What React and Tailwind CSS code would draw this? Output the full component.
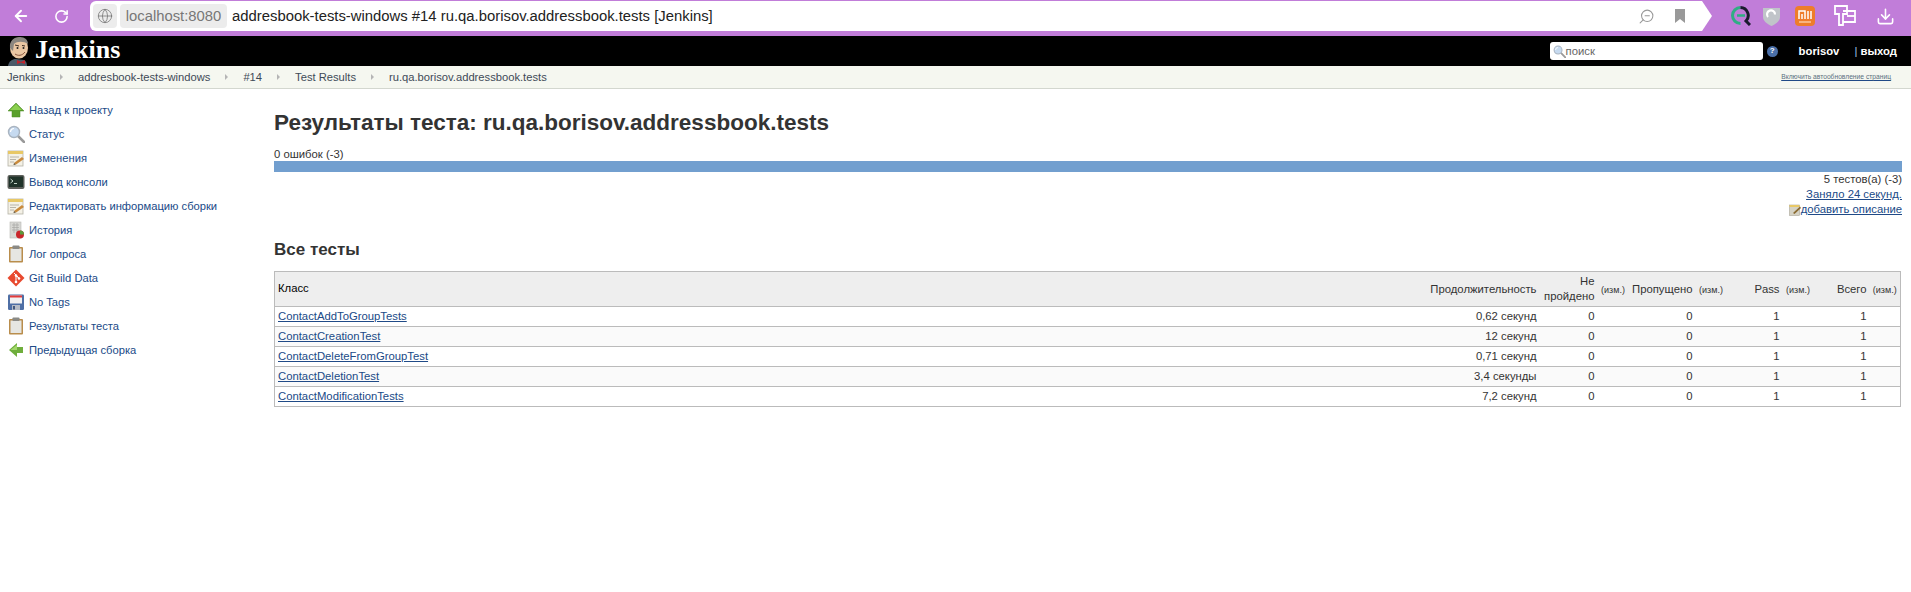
import { ArrowLeft, RotateCw, Globe, ZoomOut, Download } from 'lucide-react';

const Sans = '[font-family:"Liberation_Sans",Arial,sans-serif]';

function UpArrow() {
    return (
        <svg viewBox="0 0 18 18" className="h-[18px] w-[18px]">
            <path d="M9 2 L17 10 H13 V16 H5 V10 H1 Z" fill="#5aa02c" stroke="#4a8a22" strokeWidth="0.5" />
            <path d="M9 3 L15 9 H3 Z" fill="#8cd050" />
        </svg>
    );
}

function BackArrow() {
    return (
        <svg viewBox="0 0 18 18" className="h-[18px] w-[18px]">
            <path d="M2 9 L10 2 V6 H16 V12 H10 V16 Z" fill="#6fae3c" />
            <path d="M3.5 9 L10 3.8 V9 Z" fill="#a2d76a" />
        </svg>
    );
}

function Magnifier({ className = 'h-[18px] w-[18px]' }) {
    return (
        <svg viewBox="0 0 18 18" className={className}>
            <path d="M11 11 L17 17" stroke="#9a9a9a" strokeWidth="2.5" strokeLinecap="round" />
            <circle cx="7" cy="7" r="5.5" fill="#c6daf0" stroke="#a9b4c0" strokeWidth="1.4" />
            <path d="M3.5 7 A3.5 3.5 0 0 1 7 3.5" stroke="#fff" strokeWidth="1.2" fill="none" />
        </svg>
    );
}

function Notepad() {
    return (
        <svg viewBox="0 0 18 18" className="h-[18px] w-[18px]">
            <rect x="1" y="2" width="15" height="15" fill="#f4f1e6" stroke="#b5b2a5" strokeWidth="0.8" />
            <rect x="1" y="2" width="15" height="3" fill="#e8c866" />
            <path d="M3 8 H12 M3 10.5 H9 M3 13 H7" stroke="#a9a69a" strokeWidth="0.8" />
            <path d="M7 14 L15 8 L17 10 L9 15.5 Z" fill="#c98a3c" />
            <path d="M7 14 L9 15.5 L6.5 16 Z" fill="#5a4a32" />
        </svg>
    );
}

function Terminal() {
    return (
        <svg viewBox="0 0 18 18" className="h-[18px] w-[18px]">
            <rect x="0.5" y="2" width="17" height="14" rx="2" fill="#5c5f5a" />
            <rect x="2" y="3.5" width="14" height="10.5" fill="#1f3329" />
            <path d="M3.5 6 L6 8 L3.5 10 M7 10.5 H10" stroke="#d6e6da" strokeWidth="0.9" fill="none" />
        </svg>
    );
}

function History() {
    return (
        <svg viewBox="0 0 18 18" className="h-[18px] w-[18px]">
            <rect x="3" y="1" width="11" height="16" fill="#d8d8d4" stroke="#b8b8b4" strokeWidth="0.6" />
            <path d="M5 4 H12 M5 6.5 H12 M5 9 H12 M7 2 V12 M10 2 V12" stroke="#a8a8a4" strokeWidth="0.7" />
            <circle cx="13" cy="13.5" r="4" fill="#c9262b" />
            <path d="M13 13.5 L13 9.5 A4 4 0 0 1 17 13.5 Z" fill="#5b9a3a" />
        </svg>
    );
}

function Clipboard() {
    return (
        <svg viewBox="0 0 18 18" className="h-[18px] w-[18px]">
            <rect x="2" y="2" width="14" height="15.5" rx="1" fill="#b98d4c" />
            <rect x="3.5" y="3.5" width="11" height="12.5" fill="#e6e6e2" />
            <rect x="5.5" y="0.5" width="7" height="3.5" rx="0.8" fill="#8a8a86" />
        </svg>
    );
}

function GitLogo() {
    return (
        <svg viewBox="0 0 18 18" className="h-[18px] w-[18px]">
            <path d="M9 0.5 L17.5 9 L9 17.5 L0.5 9 Z" fill="#e8492f" />
            <path d="M7 4 L12 9 M9 6.5 V13 M9 7 L12 9" stroke="#fff" strokeWidth="1" fill="none" />
            <circle cx="9" cy="13" r="1.3" fill="#fff" />
            <circle cx="12" cy="9.5" r="1.3" fill="#fff" />
            <circle cx="9" cy="6.5" r="1.3" fill="#fff" />
        </svg>
    );
}

function Floppy() {
    return (
        <svg viewBox="0 0 18 18" className="h-[18px] w-[18px]">
            <rect x="1" y="1.5" width="16" height="15.5" rx="1.2" fill="#4f6fa5" />
            <rect x="3" y="2.5" width="12" height="8" fill="#f1f1f1" />
            <rect x="3" y="2.5" width="12" height="2" fill="#e33b3b" />
            <rect x="5" y="12" width="8" height="5" fill="#b6bcc6" />
            <rect x="6" y="13" width="2" height="3.5" fill="#44597f" />
        </svg>
    );
}

function JenkinsLogo() {
    return (
        <svg viewBox="0 0 26 30" className="h-[30px] w-[26px] shrink-0">
            <path d="M1 30 C2 25 5 23 9 23 L17 24 C19 25 20 27 20 30 Z" fill="#4b5a68" />
            <path d="M10 24 L14 26 L18 24 L18 28 L14 26.5 L10 28 Z" fill="#c6232b" />
            <ellipse cx="12" cy="12" rx="9" ry="10.5" fill="#eac7a3" />
            <path d="M3 12 C2 4 8 1 13 1 C18 1 21 4 21 8 C17 5 10 5 7 8 L6 15 Z" fill="#8a8680" />
            <path d="M8 9 L12 10 M15 9.5 L18 10" stroke="#3a2a20" strokeWidth="1" />
            <circle cx="10.5" cy="12" r="1" fill="#222" />
            <circle cx="16.5" cy="12" r="1" fill="#222" />
            <path d="M8 18 C11 20 15 20 18 16" stroke="#7a4630" strokeWidth="0.9" fill="none" />
        </svg>
    );
}

function EqLogo() {
    return (
        <svg viewBox="0 0 20 20" className="h-[20px] w-[20px]">
            <path d="M9.5 1.5 A8 8 0 0 0 9.5 17.5" stroke="#2fae84" strokeWidth="3" fill="none" />
            <path d="M9.5 1.5 A8 8 0 0 1 15 15 L19 19" stroke="#1b1b2e" strokeWidth="3" fill="none" />
            <path d="M6 9.5 H14" stroke="#2fae84" strokeWidth="2.5" />
        </svg>
    );
}

function ShieldLogo() {
    return (
        <svg viewBox="0 0 17 19" className="h-[19px] w-[17px]">
            <path d="M0 1 H17 V10 C17 14 13 17 8.5 19 C4 17 0 14 0 10 Z" fill="#c0c4c9" />
            <path d="M5 10 A4 4 0 1 1 12 7.5" stroke="#fff" strokeWidth="2.2" fill="none" />
        </svg>
    );
}

function MiLogo() {
    return (
        <svg viewBox="0 0 20 20" className="h-[20px] w-[20px]">
            <rect width="20" height="20" rx="4" fill="#ee7d2b" />
            <path d="M4 13 V5 H10 V13 M7 8 V13 M13 5 V13 M16 5 V13" stroke="#fff" strokeWidth="1.5" fill="none" />
            <path d="M4 16 H16" stroke="#ffd9b8" strokeWidth="1.2" />
        </svg>
    );
}

function KeysLogo() {
    return (
        <svg viewBox="0 0 22 22" className="h-[22px] w-[22px]" fill="none" stroke="#fff" strokeWidth="1.8">
            <path d="M1 1 H13 V9 H9 V20 H5 V9 H1 Z" />
            <path d="M9 6 H21 V17 H9" />
            <path d="M13 11 H21" />
        </svg>
    );
}

const sidebarItems = [
    { label: 'Назад к проекту', icon: <UpArrow /> },
    { label: 'Статус', icon: <Magnifier /> },
    { label: 'Изменения', icon: <Notepad /> },
    { label: 'Вывод консоли', icon: <Terminal /> },
    { label: 'Редактировать информацию сборки', icon: <Notepad /> },
    { label: 'История', icon: <History /> },
    { label: 'Лог опроса', icon: <Clipboard /> },
    { label: 'Git Build Data', icon: <GitLogo /> },
    { label: 'No Tags', icon: <Floppy /> },
    { label: 'Результаты теста', icon: <Clipboard /> },
    { label: 'Предыдущая сборка', icon: <BackArrow /> },
];

const crumbs = ['Jenkins', 'addresbook-tests-windows', '#14', 'Test Results', 'ru.qa.borisov.addressbook.tests'];

const rows = [
    { name: 'ContactAddToGroupTests', time: '0,62 секунд' },
    { name: 'ContactCreationTest', time: '12 секунд' },
    { name: 'ContactDeleteFromGroupTest', time: '0,71 секунд' },
    { name: 'ContactDeletionTest', time: '3,4 секунды' },
    { name: 'ContactModificationTests', time: '7,2 секунд' },
];

function Diff() {
    return <span className="text-[9px] text-[#333]">(изм.)</span>;
}

export default function App() {
    return (
        <div className={`${Sans} min-h-[592px] bg-white text-[11.3px] text-[#333]`}>
            {/* browser bar */}
            <div className="flex h-9 items-center bg-[#c17dd9] pb-[5px] pt-[1px]">
                <div className="flex w-[90px] shrink-0 items-center pl-[12px] text-white">
                    <ArrowLeft className="h-[18px] w-[18px]" strokeWidth={2.5} />
                    <RotateCw className="ml-[24px] h-[15px] w-[15px]" strokeWidth={2.5} />
                </div>
                <div className="flex h-[30px] w-[1622px] shrink-0 items-center rounded-l-[6px] bg-white pl-[3px] [clip-path:polygon(0_0,1612px_0,100%_50%,1612px_100%,0_100%)]">
                    <div className="flex h-[24px] w-[24px] items-center justify-center rounded-[4px] bg-[#ececec]">
                        <Globe className="h-[16px] w-[16px] text-[#777]" strokeWidth={1.2} />
                    </div>
                    <div className="ml-[3px] flex h-[24px] w-[107px] items-center justify-center rounded-[4px] bg-[#ececec] text-[14.8px] text-[#777]">
                        localhost:8080
                    </div>
                    <div className="ml-[5px] flex-1 text-[14.85px] text-[#222]">
                        addresbook-tests-windows #14 ru.qa.borisov.addressbook.tests [Jenkins]
                    </div>
                    <ZoomOut className="h-[17px] w-[17px] -scale-x-100 text-[#999]" strokeWidth={1.5} />
                    <svg viewBox="0 0 10 14" className="ml-[20px] mr-[27px] h-[14px] w-[10px]">
                        <path d="M0 0 H10 V14 L5 10 L0 14 Z" fill="#999" />
                    </svg>
                </div>
                <div className="ml-[19px] flex items-center">
                    <EqLogo />
                    <span className="ml-[12px]"><ShieldLogo /></span>
                    <span className="ml-[15px]"><MiLogo /></span>
                    <span className="ml-[19px]"><KeysLogo /></span>
                    <Download className="ml-[20px] h-[19px] w-[19px] text-white" strokeWidth={2} />
                </div>
            </div>

            {/* jenkins header */}
            <div className="flex h-[30px] items-center bg-black pr-[14px] text-white">
                <div className="ml-[7px] flex items-center">
                    <JenkinsLogo />
                    <span className="ml-[2px] pb-[2px] text-[26px] font-bold leading-none [font-family:'Liberation_Serif',serif]">Jenkins</span>
                </div>
                <div className="ml-auto flex items-center">
                    <div className="flex h-[18px] w-[213px] items-center rounded-[3px] bg-white pl-[3px] text-[11.3px] text-[#666]">
                        <Magnifier className="h-[13px] w-[13px]" />
                        поиск
                    </div>
                    <span className="ml-[4px] flex h-[11px] w-[11px] items-center justify-center rounded-full bg-[#4a6fa8] text-[8px] font-bold text-white">?</span>
                    <span className="ml-[21px] text-[11.3px] font-bold">borisov</span>
                    <span className="ml-[15px] text-[11.3px] font-bold"><span className="font-normal text-[#9cc3ea]">|</span> выход</span>
                </div>
            </div>

            {/* breadcrumbs */}
            <div className="flex h-[23px] items-center border-b border-[#d3d7cf] bg-[#f5f7f0] pl-[7px] pr-[20px] text-[11.2px]">
                {crumbs.map((crumb, i) => (
                    <div key={crumb} className="flex items-center text-[#3e4a57]">
                        {i > 0 && <span className="mx-[15px] h-0 w-0 border-y-[3px] border-l-[3px] border-y-transparent border-l-[#b5b5b5]" />}
                        {crumb}
                    </div>
                ))}
                <a className="ml-auto text-[6.7px] text-[#5a7080] underline decoration-[#204a87]">Включить автообновление страниц</a>
            </div>

            <div className="flex">
                {/* sidebar */}
                <div className="w-[274px] shrink-0 pl-[7px] pt-[9px] text-[11.2px]">
                    {sidebarItems.map((item) => (
                        <div key={item.label} className="flex h-[24px] items-center">
                            {item.icon}
                            <span className="ml-[4px] text-[#204a87]">{item.label}</span>
                        </div>
                    ))}
                </div>

                {/* main */}
                <div className="w-[1628px] shrink-0 pt-[21px]">
                    <h1 className="text-[22.5px] font-bold leading-[26px] text-[#333]">Результаты теста: ru.qa.borisov.addressbook.tests</h1>
                    <div className="mt-[12px] leading-[13px]">0 ошибок (-3)</div>
                    <div className="h-[11px] bg-[#729fcf]" />
                    <div className="text-right leading-[15px]">5 тестов(а) (-3)</div>
                    <div className="text-right leading-[15px] text-[#204a87] underline">Заняло 24 секунд.</div>
                    <div className="flex items-center justify-end leading-[15px] text-[#204a87]">
                        <svg viewBox="0 0 12 12" className="h-[12px] w-[12px]">
                            <rect x="0.5" y="1" width="10" height="10.5" fill="#d5d2c4" stroke="#a8a698" strokeWidth="0.6" />
                            <rect x="0.5" y="1" width="10" height="2" fill="#e8c866" />
                            <path d="M4 9 L11 2.5 L12 4 L5.5 10 Z" fill="#8a6a30" />
                        </svg>
                        <span className="underline">добавить описание</span>
                    </div>
                    <h2 className="mt-[23px] text-[17px] font-bold leading-[20px] text-[#333]">Все тесты</h2>
                    <table className="mt-[11px] w-[1627px] table-fixed border-collapse border border-[#bbb]">
                        <colgroup>
                            <col />
                            <col className="w-[120px]" />
                            <col className="w-[57px]" />
                            <col className="w-[31px]" />
                            <col className="w-[67px]" />
                            <col className="w-[31px]" />
                            <col className="w-[56px]" />
                            <col className="w-[31px]" />
                            <col className="w-[56px]" />
                            <col className="w-[31px]" />
                        </colgroup>
                        <thead>
                            <tr className="h-[35px] bg-[#eee] text-[#333]">
                                <th className="px-[3px] pb-[2px] text-left font-normal text-black">Класс</th>
                                <th className="whitespace-nowrap pl-[3px] pr-[4px] text-right font-normal">Продолжительность</th>
                                <th className="px-[3px] text-right font-normal leading-[15px]">Не<br />пройдено</th>
                                <th className="whitespace-nowrap text-center font-normal"><Diff /></th>
                                <th className="px-[3px] text-right font-normal">Пропущено</th>
                                <th className="whitespace-nowrap text-center font-normal"><Diff /></th>
                                <th className="px-[3px] text-right font-normal">Pass</th>
                                <th className="whitespace-nowrap text-center font-normal"><Diff /></th>
                                <th className="px-[3px] text-right font-normal">Всего</th>
                                <th className="whitespace-nowrap text-center font-normal"><Diff /></th>
                            </tr>
                        </thead>
                        <tbody>
                            {rows.map((row, i) => (
                                <tr key={row.name} className={`h-[20px] border-t border-[#bbb] ${i % 2 === 1 ? 'bg-[#fafafa]' : 'bg-white'}`}>
                                    <td className="px-[3px]"><span className="text-[#204a87] underline">{row.name}</span></td>
                                    <td className="pl-[3px] pr-[4px] text-right">{row.time}</td>
                                    <td className="px-[3px] text-right">0</td>
                                    <td />
                                    <td className="px-[3px] text-right">0</td>
                                    <td />
                                    <td className="px-[3px] text-right">1</td>
                                    <td />
                                    <td className="px-[3px] text-right">1</td>
                                    <td />
                                </tr>
                            ))}
                        </tbody>
                    </table>
                </div>
            </div>
        </div>
    );
}
